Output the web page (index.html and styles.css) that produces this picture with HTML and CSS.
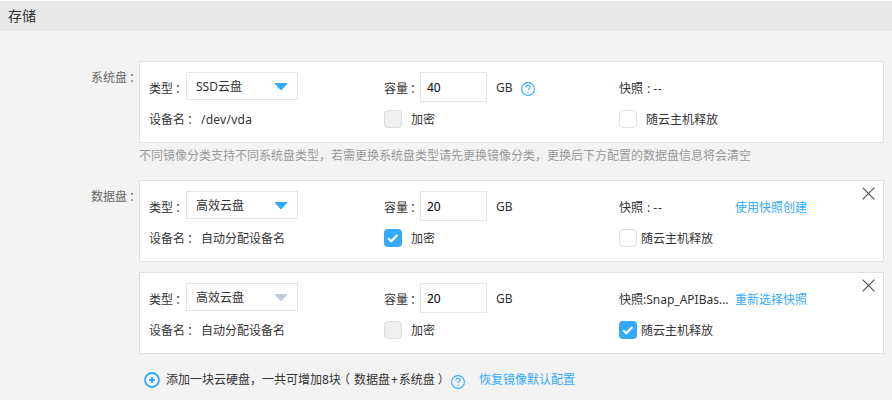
FILE: index.html
```
<!DOCTYPE html>
<html lang="zh-CN">
<head>
<meta charset="utf-8">
<title>存储</title>
<link rel="stylesheet" href="styles.css">
</head>
<body>
<svg class="defs" aria-hidden="true">
  <symbol id="help" viewBox="0 0 14 14"><circle cx="7" cy="7" r="6.4" fill="none" stroke="currentColor" stroke-width="1.1"/><path d="M4.9 5.4C4.9 4 5.7 3.3 7 3.3s2.1.7 2.1 1.8c0 1.4-2.1 1.6-2.1 3.2M7 9.5v1.3" fill="none" stroke="currentColor" stroke-width="1.1"/></symbol>
  <symbol id="check" viewBox="0 0 18 18"><path d="M4.2 9.3l3 3L13.4 6" fill="none" stroke="#fff" stroke-width="2.1"/></symbol>
  <symbol id="close" viewBox="0 0 13 13"><path d="M.6.6l11.8 11.8M12.4.6L.6 12.4" fill="none" stroke="#555" stroke-width="1.2"/></symbol>
</svg>
<header class="title">存储</header>
<main class="form">
  <section class="group">
    <div class="label">系统盘<i class="pt">：</i></div>
    <div class="disks">
      <article class="card">
        <div class="cell top"><span class="key">类型<i class="pt">：</i></span><div class="select"><span>SSD云盘</span><b class="arrow"></b></div></div>
        <div class="cell top"><span class="key key-cap">容量<i class="pt">：</i></span><input class="input" value="40"><span class="unit">GB</span><svg class="help"><use href="#help"/></svg></div>
        <div class="cell top"><span class="key key-snap">快照<i class="narrow">:</i><span class="dash">--</span></span></div>
        <div class="cell"><span class="device">设备名<i class="pt">：</i></span><span class="latin">/dev/vda</span></div>
        <div class="cell"><span class="box disabled"></span><span class="boxtext">加密</span></div>
        <div class="cell"><span class="box"></span><span class="boxtext">随云主机释放</span></div>
      </article>
      <p class="hint">不同镜像分类支持不同系统盘类型，若需更换系统盘类型请先更换镜像分类，更换后下方配置的数据盘信息将会清空</p>
    </div>
  </section>
  <section class="group">
    <div class="label">数据盘<i class="pt">：</i></div>
    <div class="disks">
      <article class="card">
        <div class="cell top"><span class="key">类型<i class="pt">：</i></span><div class="select"><span>高效云盘</span><b class="arrow"></b></div></div>
        <div class="cell top"><span class="key key-cap">容量<i class="pt">：</i></span><input class="input" value="20"><span class="unit">GB</span></div>
        <div class="cell top"><span class="key key-snap">快照<i class="narrow">:</i><span class="dash">--</span></span><a class="link">使用快照创建</a></div>
        <div class="cell"><span class="device">设备名<i class="pt">：</i></span><span>自动分配设备名</span></div>
        <div class="cell"><span class="box on"><svg><use href="#check"/></svg></span><span class="boxtext">加密</span></div>
        <div class="cell"><span class="box"></span><span class="boxtext near">随云主机释放</span></div>
        <svg class="close"><use href="#close"/></svg>
      </article>
      <article class="card">
        <div class="cell top"><span class="key">类型<i class="pt">：</i></span><div class="select"><span>高效云盘</span><b class="arrow off"></b></div></div>
        <div class="cell top"><span class="key key-cap">容量<i class="pt">：</i></span><input class="input" value="20"><span class="unit">GB</span></div>
        <div class="cell top"><span class="key key-snap">快照:Snap_APIBas...</span><a class="link">重新选择快照</a></div>
        <div class="cell"><span class="device">设备名<i class="pt">：</i></span><span>自动分配设备名</span></div>
        <div class="cell"><span class="box disabled"></span><span class="boxtext">加密</span></div>
        <div class="cell"><span class="box on"><svg><use href="#check"/></svg></span><span class="boxtext near">随云主机释放</span></div>
        <svg class="close"><use href="#close"/></svg>
      </article>
      <div class="add">
        <svg class="plus" viewBox="0 0 16 16"><circle cx="8" cy="8" r="7" fill="none" stroke="#33aaff" stroke-width="1.9"/><path d="M8 5v6M5 8h6" stroke="#33aaff" stroke-width="1.9"/></svg>
        <span class="addtext">添加一块云硬盘，一共可增加8块<i class="open">（</i>数据盘<i class="sum">+</i>系统盘<i class="shut">）</i></span>
        <svg class="help"><use href="#help"/></svg>
        <a class="reset">恢复镜像默认配置</a>
      </div>
    </div>
  </section>
</main>
</body>
</html>
```
FILE: styles.css
```
* { box-sizing: border-box; }
body {
  margin: 0;
  height: 400px;
  overflow: hidden;
  background: #f3f3f3;
  color: #333;
  font: 12px/18px "Noto Sans", "Noto Sans CJK SC", sans-serif;
  white-space: nowrap;
}
.defs { position: absolute; width: 0; height: 0; }
i { font-style: normal; }
.pt { padding-left: 2px; }
.title {
  height: 31px;
  padding-left: 8px;
  border-top: 1px solid #fafafa;
  background: #e8e8e8;
  font-size: 14px;
  line-height: 30px;
}
.form { padding-top: 30px; }
.group { display: flex; }
.label { width: 139px; padding: 8px 0 0 91px; color: #666; }
.disks { width: 745px; }
.card {
  position: relative;
  display: grid;
  grid-template-columns: 235px 235px 1fr;
  grid-template-rows: 38px 18px;
  height: 82px;
  padding: 10px 0 0 9px;
  border: 1px solid #d9e2ea;
  background: #fff;
}
.card + .card { margin-top: 10px; }
.cell { display: flex; align-items: center; height: 18px; }
.cell.top { align-items: flex-start; height: 30px; }
.key { flex: none; width: 37px; margin-top: 8px; }
.key-cap { width: 36px; }
.key-snap { width: 116px; }
.narrow { margin: 0 3px 0 4px; }
.dash { letter-spacing: .9px; }
.select {
  flex: none;
  display: flex;
  align-items: center;
  justify-content: space-between;
  width: 112px;
  height: 28px;
  padding: 1px 10px 0 9px;
  border: 1px solid #e5e5e5;
  background: #fff;
}
.arrow { width: 12px; height: 7px; background: #33aaff; clip-path: polygon(0 0, 100% 0, 100% 15%, 55% 100%, 45% 100%, 0 15%); }
.arrow.off { background: #c0ccd8; }
.input {
  flex: none;
  width: 67px;
  height: 30px;
  padding: 0 6px;
  border: 1px solid #e5e5e5;
  background: #fff;
  color: #000;
  font: inherit;
}
.unit { width: 25px; margin: 7px 0 0 9px; }
.help { flex: none; width: 14px; height: 14px; color: #33aaff; }
.cell .help { margin-top: 10px; }
.link, .reset { color: #33aaff; }
.link { margin-top: 8px; }
.device { width: 52px; }
.latin { letter-spacing: .25px; }
.box { width: 18px; height: 18px; border: 1px solid #d9e2ea; border-radius: 4px; background: #fff; }
.box.disabled { border-color: #ddd; background: #f0f0f0; }
.box.on { border: 0; background: #33aaff; }
.box svg { display: block; width: 18px; height: 18px; }
.boxtext, .device, .device + span { padding-top: 1px; }
.boxtext { margin-left: 9px; }
.boxtext.near { margin-left: 4px; }
.close { position: absolute; top: 6px; right: 8px; width: 13px; height: 13px; }
.hint { height: 37px; margin: 0; padding-top: 4px; color: #999; }
.add { display: flex; align-items: center; padding: 17px 0 0 5px; }
.plus { flex: none; width: 16px; height: 16px; margin-right: 6px; }
.addtext { flex: none; width: 285px; }
.open { margin: 0 4px 0 -3px; }
.sum { margin: 0 1px; }
.shut { margin-left: 3px; }
.add .help { margin: 3px 14px 0 0; }
```
